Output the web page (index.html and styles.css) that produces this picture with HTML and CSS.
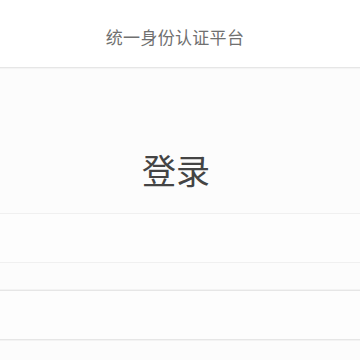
FILE: index.html
```html
<!DOCTYPE html>
<html lang="zh-CN">
<head>
    <meta charset="UTF-8">
    <meta name="viewport" content="width=device-width, initial-scale=1.0">
    <title>统一身份认证平台</title>
    <link rel="stylesheet" href="styles.css">
</head>
<body>
    <header class="topbar">
        <span class="topbar-title">统一身份认证平台</span>
    </header>

    <main class="login">
        <h1 class="login-title">登录</h1>

        <div class="field field-user">
            <input type="text" aria-label="用户名">
        </div>
        <div class="field field-pass">
            <input type="password" aria-label="密码">
        </div>
    </main>
</body>
</html>
```

FILE: styles.css
```css
html, body {
    margin: 0;
    padding: 0;
}
body {
    font-family: "Noto Sans CJK SC", "Noto Sans", sans-serif;
    background-color: #fcfcfc;
    width: 360px;
    height: 360px;
    overflow: hidden;
}
.topbar {
    height: 67px;
    background-color: #fff;
    border-bottom: 1px solid #e6e6e6;
    box-shadow: 0 1px 1px rgba(0,0,0,0.03);
    display: flex;
    align-items: center;
    justify-content: center;
}
.topbar-title {
    font-size: 17px;
    letter-spacing: 0.3px;
    color: #707070;
    padding-top: 6px;
    padding-right: 10px;
}
.login-title {
    margin: 0;
    height: 145px;
    display: flex;
    align-items: center;
    justify-content: center;
    font-size: 34px;
    font-weight: normal;
    color: #444;
    padding-top: 58px;
    padding-right: 8px;
    box-sizing: border-box;
}
.field {
    height: 48px;
    background-color: #fdfdfd;
}
.field input {
    width: 100%;
    height: 100%;
    border: none;
    background: transparent;
    outline: none;
    padding: 0 16px;
    box-sizing: border-box;
}
.field-user {
    border-top: 1px solid #f0f0f0;
    border-bottom: 1px solid #f0f0f0;
}
.field-pass {
    margin-top: 27px;
    border-top: 1px solid #e6e6e6;
    border-bottom: 1px solid #e6e6e6;
    box-shadow: 0 1px 0 #f3f3f3, 0 -1px 0 #f3f3f3;
}
```
